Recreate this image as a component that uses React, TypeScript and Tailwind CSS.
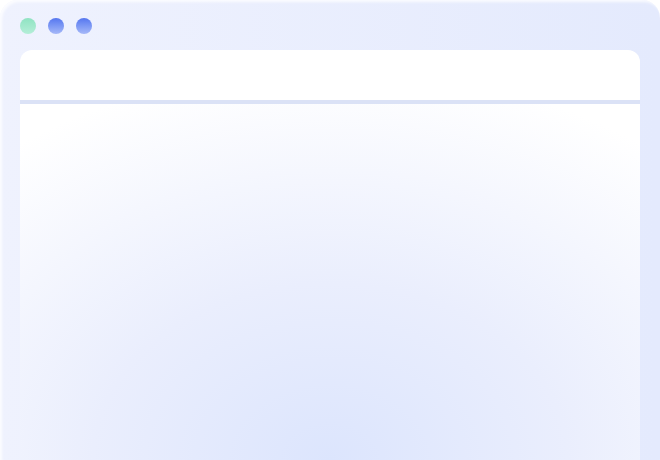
export default function App() {
  return (
    <div className="w-[660px] h-[460px] overflow-hidden bg-white">
      <div className="h-full rounded-t-[18px] bg-gradient-to-r from-[#eff2fe] to-[#e4eafd] shadow-[inset_2px_2px_3px_rgba(255,255,255,0.8)] flex flex-col">
        <div className="h-[50px] px-5 pt-[2px] flex items-center gap-3">
          <span className="w-4 h-4 rounded-full bg-gradient-to-b from-[#8fe3c2] to-[#b4eed8]" />
          <span className="w-4 h-4 rounded-full bg-gradient-to-b from-[#5676ef] to-[#a6b8f8]" />
          <span className="w-4 h-4 rounded-full bg-gradient-to-b from-[#5676ef] to-[#a6b8f8]" />
        </div>
        <div className="flex-1 mx-5 rounded-t-xl bg-white flex flex-col overflow-hidden">
          <div className="h-[54px] border-b-[4px] border-[#dbe2f6]" />
          <div className="flex-1 bg-[radial-gradient(ellipse_85%_110%_at_50%_100%,#dce5fd_0%,#eaeefd_45%,#ffffff_100%)]" />
        </div>
      </div>
    </div>
  )
}
